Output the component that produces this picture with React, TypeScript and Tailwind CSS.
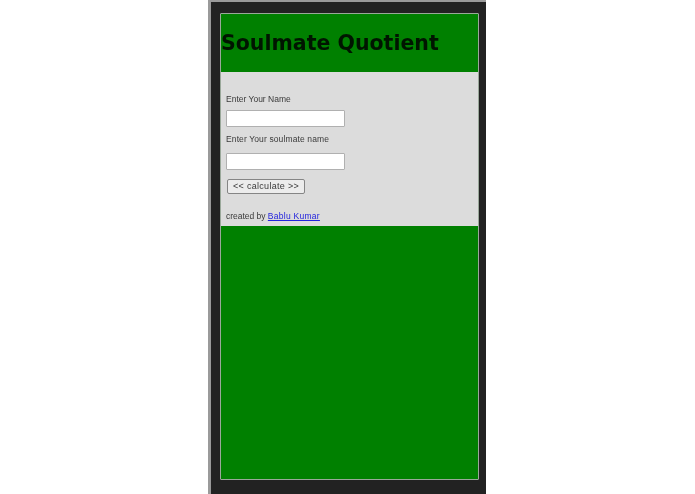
export default function App() {
  return (
    <div className="h-[494px] w-[695px] overflow-hidden bg-white font-['Liberation_Sans',sans-serif]">
      <div className="ml-[208px] flex h-[494px] w-[278px] flex-col border-l-[3px] border-t-[2px] border-[#9a9a9a] bg-[#222222] pb-[14px] pl-[9px] pr-[7px] pt-[11px] blur-[0.5px]">
        <div className="flex flex-1 flex-col rounded-[1px] border border-[#9aa89a] bg-[#008000]">
          <div className="flex h-[58px] items-center">
            <h1 className="font-['DejaVu_Sans',sans-serif] text-[20.5px] font-bold leading-none text-[#001500]">Soulmate Quotient</h1>
          </div>
          <div className="flex h-[154px] flex-col bg-[#dcdcdc] pl-[5px] text-[8.5px] leading-none text-[#3a3a3a]">
            <label className="mt-[23px]">Enter Your Name</label>
            <input className="mt-[6px] h-[17px] w-[119px] rounded-[1px] border border-[#b0b0b0] bg-white" />
            <label className="mt-[8px] tracking-[0.12px]">Enter Your soulmate name</label>
            <input className="mt-[10px] h-[17px] w-[119px] rounded-[1px] border border-[#b0b0b0] bg-white" />
            <button className="mt-[9px] ml-px h-[15px] w-[78px] rounded-[2px] border border-[#858585] bg-[#ececec] text-[9px] tracking-[0.3px] text-[#3a3a3a]">&lt;&lt; calculate &gt;&gt;</button>
            <p className="mt-[18px] tracking-[-0.02px]">created by <a href="#" className="tracking-[0.27px] text-[#2222dd] underline">Bablu Kumar</a></p>
          </div>
        </div>
      </div>
    </div>
  );
}
